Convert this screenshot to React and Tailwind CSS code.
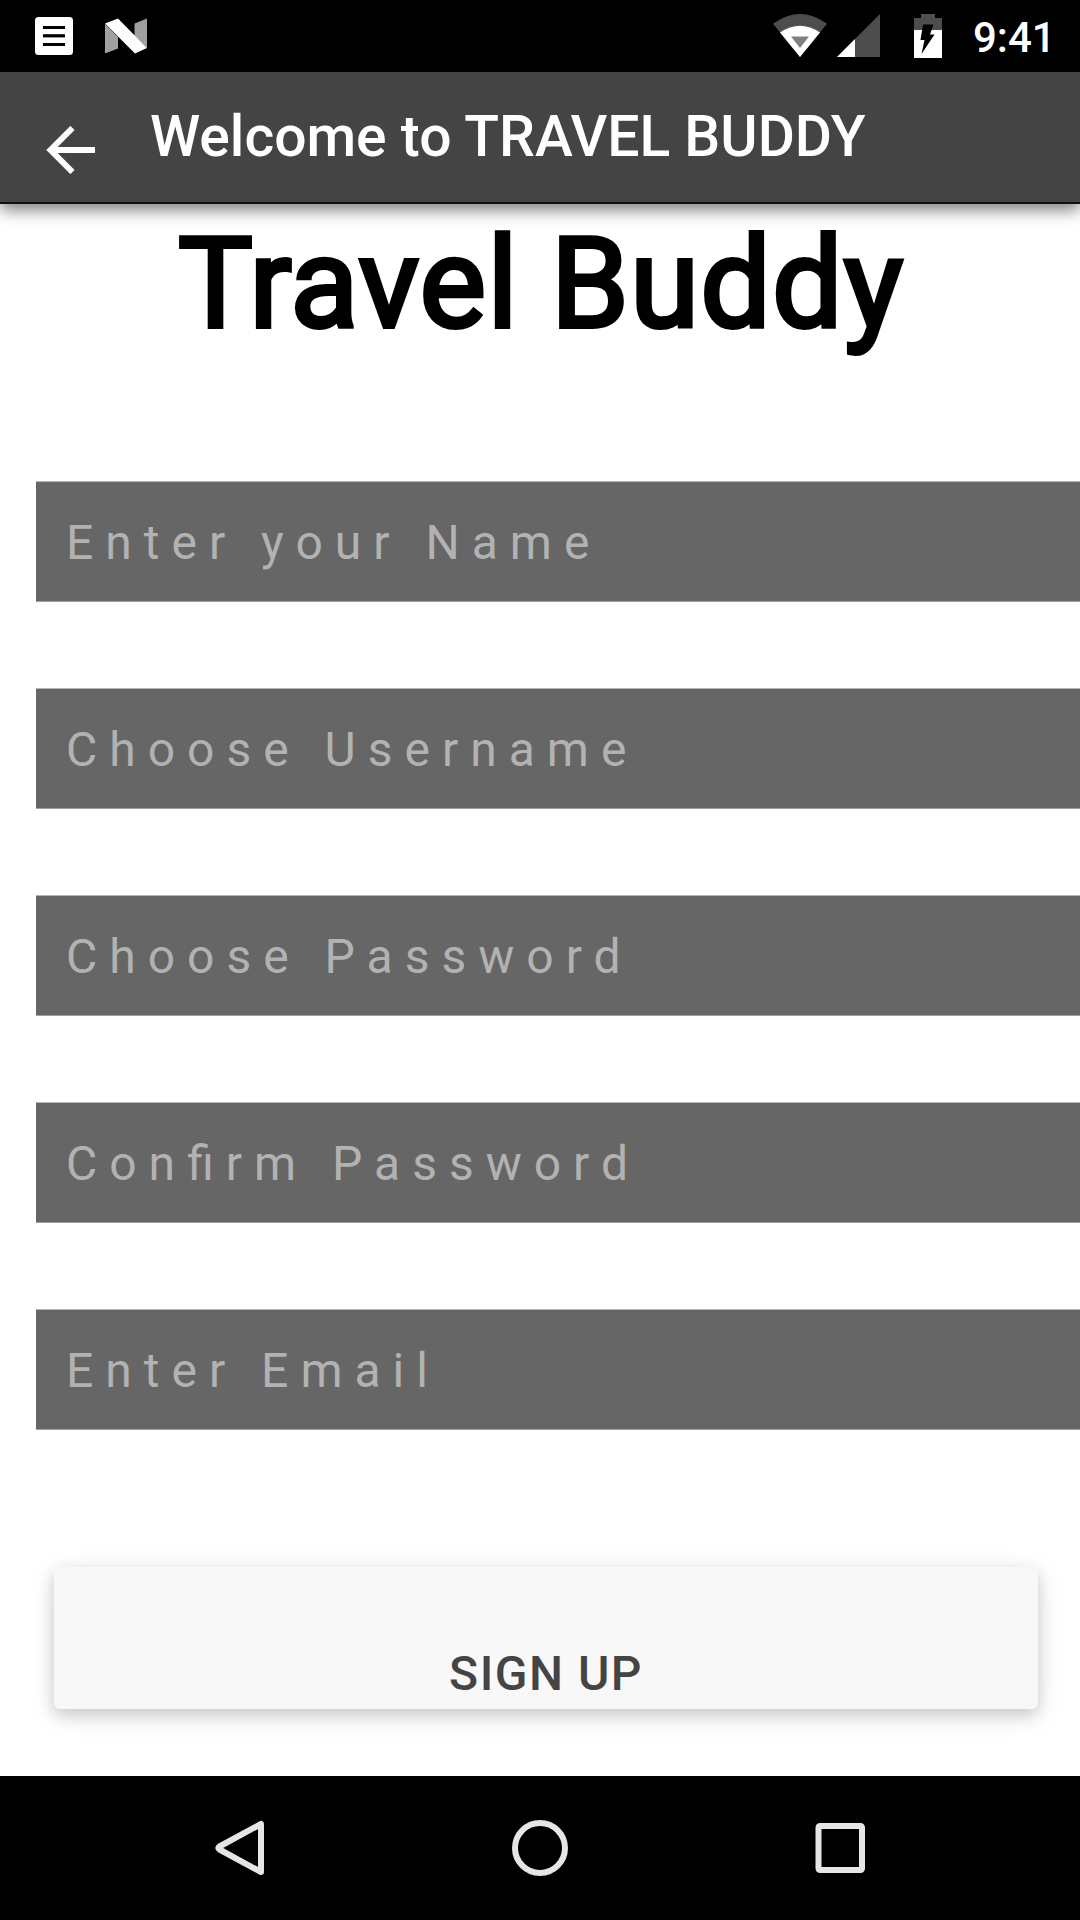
const fields = [
  { label: "Enter your Name", type: "text" },
  { label: "Choose Username", type: "text" },
  { label: "Choose Password", type: "password" },
  { label: "Confirm Password", type: "password" },
  { label: "Enter Email", type: "email" },
];

function StatusBar() {
  return (
    <div className="flex h-[72px] items-start bg-black text-white">
      <svg className="ml-[35px] mt-[17px] h-[38px] w-[38px] shrink-0" viewBox="0 0 38 38">
        <rect width="38" height="38" rx="3.5" fill="#fff" />
        <path d="M8 9h22v3H8zM8 26h22v3H8z" fill="#000" />
        <path d="M8 17h22v3.500H8z" fill="#333" />
        <path d="M8 18h22v2H8z" fill="#000" />
      </svg>
      <svg className="ml-8 mt-[18px] h-9 w-[42px] shrink-0" viewBox="0 0 42 36">
        <path d="M0 6l13 13v11.500L0 35.500zM29.500 5.500L42 0.500v29.500L29.500 18z" fill="#a0a0a0" />
        <path d="M0 5.500L13 0.500 42 30 30 35.500z" fill="#fff" />
      </svg>
      <svg className="ml-[626px] mt-[14px] h-[43px] w-[54px] shrink-0" viewBox="0 0 54 43">
        <path d="M0 9.700Q27 -9.700 54 9.700L27 43z" fill="#4d4d4d" />
        <path d="M7 18.500Q27 5 47 18.500L27 43z" fill="#fff" />
        <path d="M18 22.500h18L27 34z" fill="#808080" />
      </svg>
      <svg className="ml-[10px] mt-[14px] h-[43px] w-[43px] shrink-0" viewBox="0 0 43 43">
        <path d="M43 0v43H0z" fill="#4d4d4d" />
        <path d="M18 25v18H0z" fill="#fff" />
      </svg>
      <svg className="ml-[34px] mt-[14px] h-11 w-7 shrink-0" viewBox="0 0 28 44">
        <path d="M7 0h14v4h7v13H0V4h7z" fill="#4d4d4d" />
        <path d="M0 16h28v28H0z" fill="#fff" />
        <path d="M9 10.500h10.500l-3.500 10h4.500L7.500 40 10.500 26H6.500z" fill="#000" />
      </svg>
      <span className="ml-[31px] mt-[13px] text-[42px] leading-[50px] font-medium">9:41</span>
    </div>
  );
}

function Header() {
  return (
    <header className="relative z-10 flex h-[132px] items-start border-b-2 border-[#111] bg-[#444] text-white shadow-[0_6px_15px_rgba(0,0,0,0.5)]">
      <svg className="ml-[46px] mt-[54px] h-12 w-[49px] shrink-0" viewBox="0 0 49 48" fill="none" stroke="#fff" strokeWidth="6">
        <path d="M26.500 2L4.500 24l22 22M4 24h45" />
      </svg>
      <h2 className="ml-[55px] mt-[30px] text-[57px] leading-[70px] font-medium whitespace-nowrap">
        Welcome to TRAVEL BUDDY
      </h2>
    </header>
  );
}

function NavBar() {
  return (
    <nav className="flex h-36 shrink-0 items-center justify-center gap-[244px] bg-black">
      <svg className="h-14 w-14" viewBox="0 0 56 56" fill="none" stroke="#e6e6e6" strokeWidth="6" strokeLinejoin="round">
        <path d="M49 4v48L7.500 29.500Q5 28 7.500 26.500z" />
      </svg>
      <svg className="h-14 w-14" viewBox="0 0 56 56" fill="none" stroke="#e6e6e6" strokeWidth="6">
        <circle cx="28" cy="28" r="25" />
      </svg>
      <svg className="h-14 w-14" viewBox="0 0 56 56" fill="none" stroke="#e6e6e6" strokeWidth="6">
        <rect x="6.500" y="6" width="43.500" height="44" rx="1.500" />
      </svg>
    </nav>
  );
}

export default function App() {
  return (
    <div className="flex h-[1920px] w-[1080px] flex-col overflow-hidden bg-white font-['Roboto',sans-serif]">
      <StatusBar />
      <Header />
      <main className="flex flex-1 flex-col overflow-hidden">
        <h1 className="mt-[6px] pl-[2px] text-center text-[125.5px] leading-[150px] font-normal tracking-[1px] text-black [-webkit-text-stroke:4px_#000]">
          Travel Buddy
        </h1>
        <form className="mt-[121px] flex flex-col">
          <div className="ml-9 flex flex-col gap-[86px]">
            {fields.map((f) => (
              <input
                key={f.label}
                type={f.type}
                placeholder={f.label}
                className="block h-[121px] w-full border-y border-t-[#b4b4b4] border-b-[#a0a0a0] bg-[#666] pt-[2px] pl-[30px] text-5xl tracking-[12px] text-white outline-none [font-feature-settings:'liga'] placeholder:text-[#b2b2b2] placeholder:opacity-100"
              />
            ))}
          </div>
          <button
            type="button"
            className="mt-[137px] ml-[54px] flex h-[142px] w-[984px] items-start justify-center rounded-md bg-[#f8f8f8] pt-[79px] text-5xl leading-[56px] font-medium tracking-[1.5px] text-[#444] shadow-[0_6px_15px_0_rgba(0,0,0,0.16),0_6px_30px_0_rgba(0,0,0,0.09)]"
          >
            SIGN UP
          </button>
        </form>
      </main>
      <NavBar />
    </div>
  );
}
